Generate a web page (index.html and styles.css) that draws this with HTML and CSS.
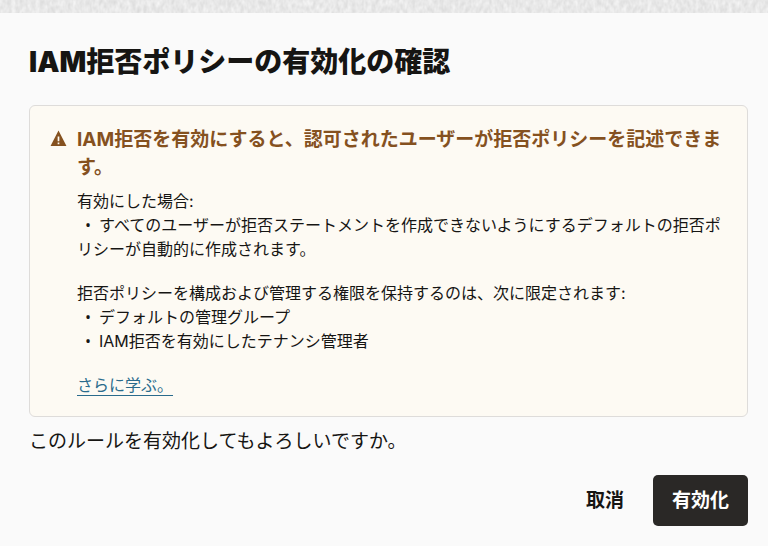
FILE: index.html
```html
<!DOCTYPE html>
<html lang="ja">
<head>
    <meta charset="UTF-8">
    <meta name="viewport" content="width=device-width, initial-scale=1.0">
    <title>IAM拒否ポリシーの有効化の確認</title>
    <link rel="stylesheet" href="styles.css">
</head>
<body>
    <!-- Textured strip above the dialog -->
    <svg class="strip" aria-hidden="true">
        <filter id="grain" x="0" y="0" width="100%" height="100%" color-interpolation-filters="sRGB">
            <feTurbulence type="fractalNoise" baseFrequency="0.25 0.15" numOctaves="2" seed="4"/>
            <feColorMatrix values="0.14 0 0 0 0.84  0.14 0 0 0 0.84  0.14 0 0 0 0.84  0 0 0 0 1"/>
        </filter>
        <rect width="100%" height="100%" filter="url(#grain)"/>
    </svg>

    <main class="dialog">
        <h1>IAM拒否ポリシーの有効化の確認</h1>

        <section class="warning">
            <svg class="warning-icon" viewBox="0 0 16 16" aria-hidden="true">
                <path fill-rule="evenodd" d="M8 0.5L15.5 15H0.5ZM7.2 6V10.5H8.8V6ZM7.2 11.8V13.4H8.8V11.8Z"/>
            </svg>
            <div class="warning-body">
                <h2>IAM拒否を有効にすると、認可されたユーザーが拒否ポリシーを記述できます。</h2>
                <p>有効にした場合:</p>
                <p class="item">すべてのユーザーが拒否ステートメントを作成できないようにするデフォルトの拒否ポリシーが自動的に作成されます。</p>
                <p class="group">拒否ポリシーを構成および管理する権限を保持するのは、次に限定されます:</p>
                <p class="item">デフォルトの管理グループ</p>
                <p class="item">IAM拒否を有効にしたテナンシ管理者</p>
                <p class="group"><a href="#">さらに学ぶ。</a></p>
            </div>
        </section>

        <p class="question">このルールを有効化してもよろしいですか。</p>

        <div class="actions">
            <button type="button" class="btn">取消</button>
            <button type="button" class="btn btn-primary">有効化</button>
        </div>
    </main>
</body>
</html>
```

FILE: styles.css
```css
* {
    box-sizing: border-box;
}
body {
    margin: 0;
    font-family: Inter, "Noto Sans CJK JP", sans-serif;
    font-size: 16px;
    line-height: 24px;
    color: #161513;
    background: #fafafa;
}
h1, h2, p {
    margin: 0;
}
.strip {
    display: block;
    width: 100%;
    height: 13px;
}
.dialog {
    padding: 29px 20px 20px 29px;
}
h1 {
    font-size: 28px;
    line-height: 40px;
    font-weight: 900;
}
.warning {
    display: flex;
    gap: 10px;
    margin-top: 23px;
    padding: 20px 20px 19px 20px;
    background: #fdfaf3;
    border: 1px solid #dedcda;
    border-radius: 6px;
}
.warning-icon {
    flex: none;
    width: 17px;
    height: 17px;
    margin-top: 4px;
    fill: #85511f;
}
.warning h2 {
    margin-bottom: 7px;
    font-size: 19px;
    line-height: 28px;
    color: #85511f;
}
.item::before {
    content: "•";
    margin: 0 8px;
    font-family: "Open Sans", sans-serif;
}
.group {
    margin-top: 20px;
}
a {
    color: #2a6b8c;
    text-underline-offset: 4px;
}
.question {
    margin-top: 11px;
    font-size: 19px;
    line-height: 28px;
}
.actions {
    display: flex;
    justify-content: flex-end;
    gap: 10px;
    margin-top: 19px;
}
.btn {
    padding: 12px 19px;
    font: inherit;
    font-size: 19px;
    font-weight: 700;
    line-height: 27px;
    color: #161513;
    background: none;
    border: none;
    border-radius: 5px;
    cursor: pointer;
}
.btn-primary {
    color: #fff;
    background: #2a2826;
}
```
